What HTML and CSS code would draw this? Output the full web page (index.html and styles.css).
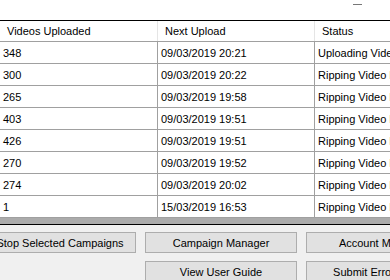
FILE: index.html
```html
<!DOCTYPE html>
<html lang="en">
<head>
    <meta charset="UTF-8">
    <title>Campaigns</title>
    <link rel="stylesheet" href="styles.css">
</head>
<body>
    <div class="titlebar">
        <span class="min-btn"></span>
    </div>

    <div class="grid">
        <table class="campaigns">
            <thead>
                <tr>
                    <th class="col-count">Videos Uploaded</th>
                    <th class="col-next">Next Upload</th>
                    <th class="col-status">Status</th>
                </tr>
            </thead>
            <tbody>
                <tr><td>348</td><td>09/03/2019 20:21</td><td>Uploading Video</td></tr>
                <tr><td>300</td><td>09/03/2019 20:22</td><td>Ripping Video From</td></tr>
                <tr><td>265</td><td>09/03/2019 19:58</td><td>Ripping Video From</td></tr>
                <tr><td>403</td><td>09/03/2019 19:51</td><td>Ripping Video From</td></tr>
                <tr><td>426</td><td>09/03/2019 19:51</td><td>Ripping Video From</td></tr>
                <tr><td>270</td><td>09/03/2019 19:52</td><td>Ripping Video From</td></tr>
                <tr><td>274</td><td>09/03/2019 20:02</td><td>Ripping Video From</td></tr>
                <tr><td>1</td><td>15/03/2019 16:53</td><td>Ripping Video From</td></tr>
            </tbody>
        </table>
        <div class="grid-bottom"></div>
    </div>

    <div class="actions">
        <button>Stop Selected Campaigns</button>
        <button>Campaign Manager</button>
        <button>Account Manager</button>
        <span></span>
        <button>View User Guide</button>
        <button>Submit Error Report</button>
    </div>
</body>
</html>
```

FILE: styles.css
```css
body {
    margin: 0;
    width: 390px;
    height: 280px;
    overflow: hidden;
    background-color: #f0f0f0;
    font-family: "Liberation Sans", Arial, sans-serif;
    font-size: 11px;
    color: #000;
}
.titlebar {
    height: 20px;
    background-color: #fff;
    display: flex;
    justify-content: flex-end;
}
.min-btn {
    width: 9px;
    height: 1px;
    margin: 4px 28px 0 0;
    background-color: #777;
}
.grid {
    border-top: 1px solid #000;
    border-bottom: 1px solid #000;
    width: 390px;
    overflow: hidden;
}
.campaigns {
    border-collapse: collapse;
    table-layout: fixed;
    width: 480px;
    margin-left: -1px;
    background-color: #fff;
}
.campaigns th {
    height: 20px;
    padding: 0 0 0 7px;
    font-weight: normal;
    text-align: left;
    white-space: nowrap;
    border-left: 1px solid #e5e5e5;
    border-bottom: 1px solid #a0a0a0;
}
.campaigns td {
    height: 21px;
    padding: 0 0 0 3px;
    white-space: nowrap;
    overflow: hidden;
    border-left: 1px solid #a0a0a0;
    border-bottom: 1px solid #a0a0a0;
}
.campaigns th:first-child,
.campaigns td:first-child {
    border-left-color: transparent;
}
.col-count {
    width: 150px;
}
.col-next {
    width: 149px;
}
.grid-bottom {
    height: 6px;
    background-color: #ababab;
}
.actions {
    display: grid;
    grid-template-columns: 152px 152px 152px;
    column-gap: 9px;
    row-gap: 8px;
    margin: 7px 0 0 -16px;
}
.actions button {
    height: 21px;
    padding: 0;
    font-family: inherit;
    font-size: 11px;
    color: #000;
    background-color: #e1e1e1;
    border: 1px solid #adadad;
    white-space: nowrap;
    overflow: hidden;
}
```
